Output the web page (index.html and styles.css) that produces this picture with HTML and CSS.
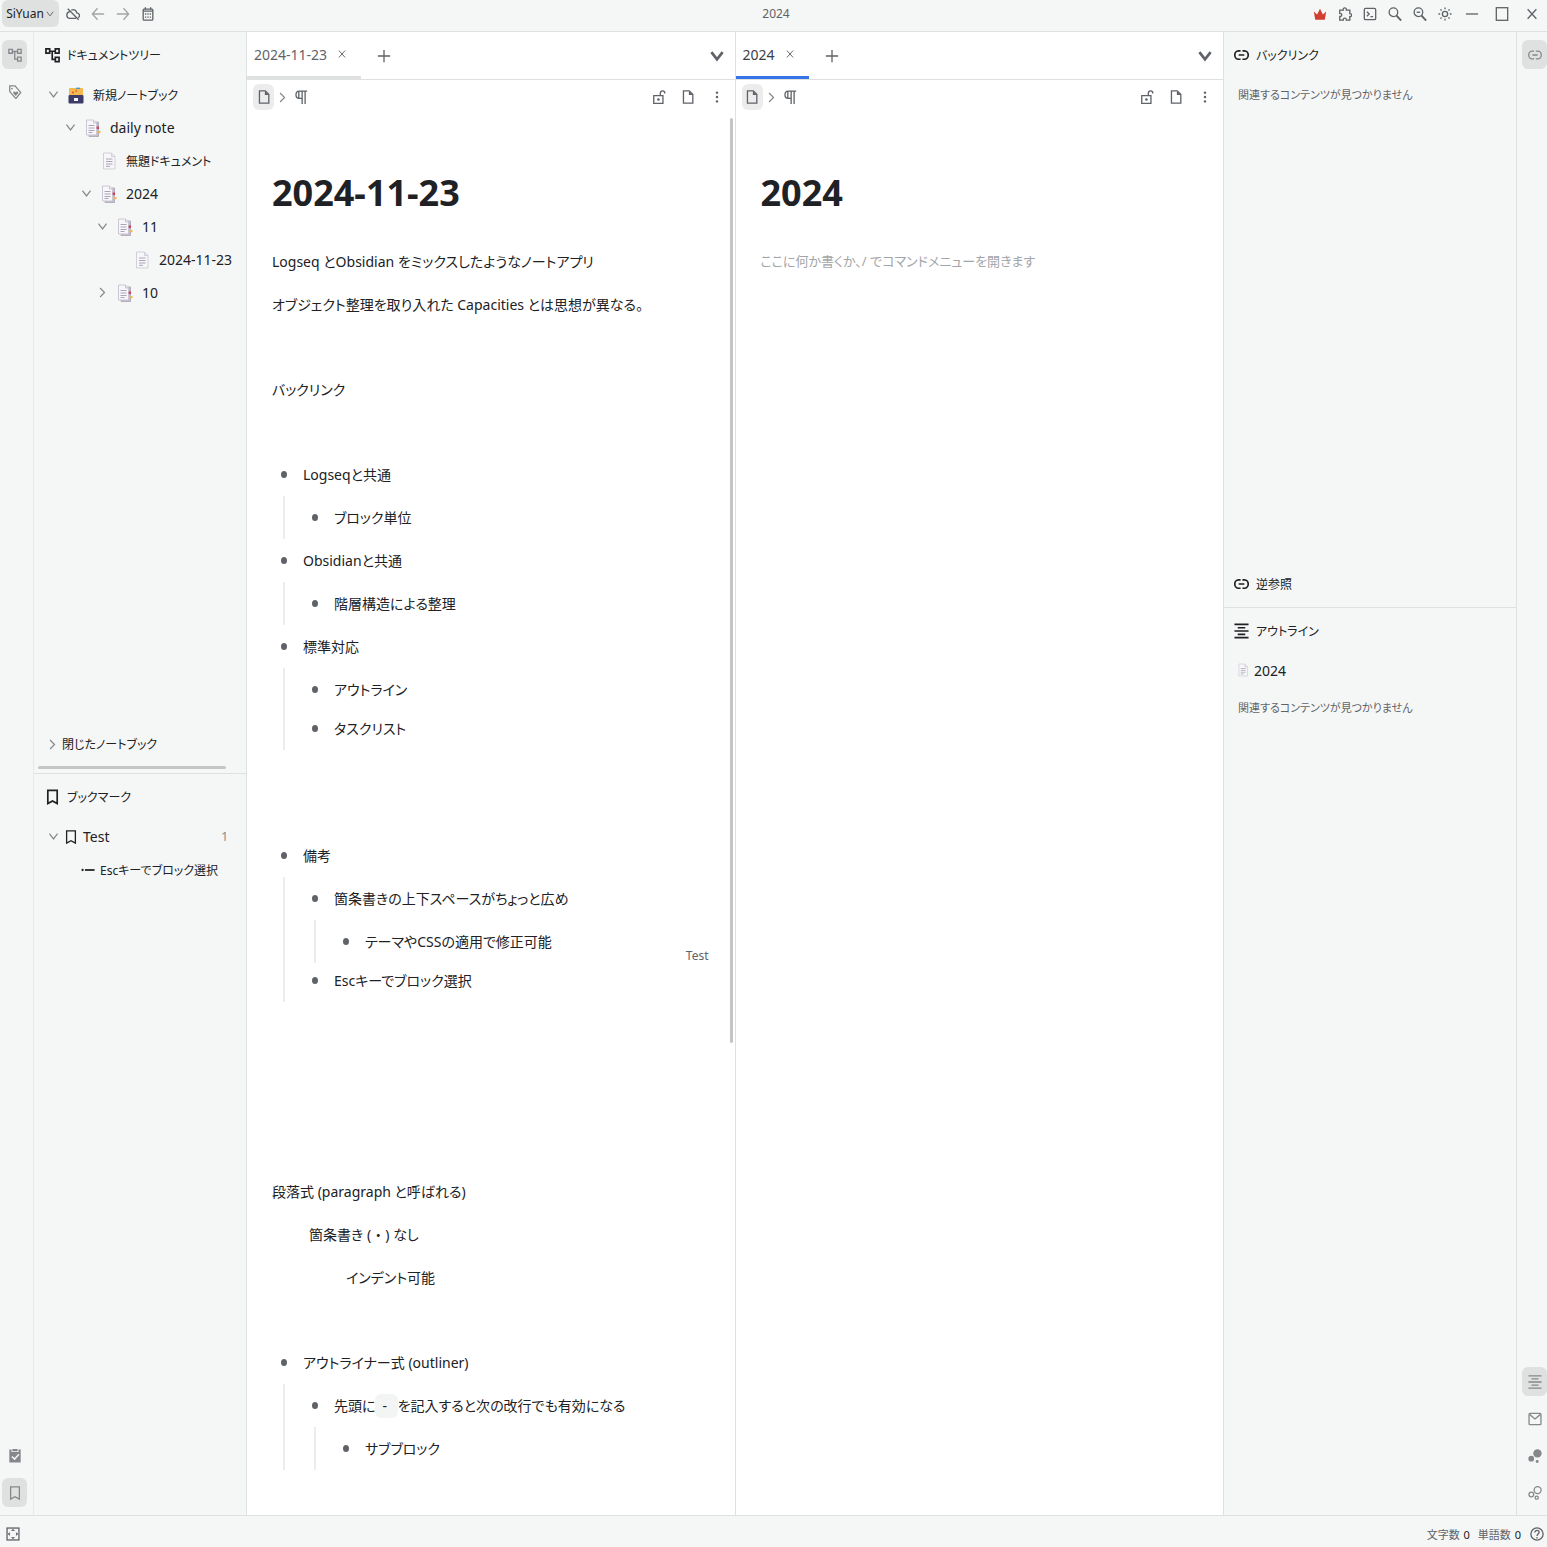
FILE: index.html
```
<!DOCTYPE html>
<html lang="ja">

<head>
    <meta charset="utf-8">
    <meta name="viewport" content="width=device-width, initial-scale=1.0">
    <title>SiYuan</title>
    <link rel="stylesheet" href="styles.css">
</head>

<body>

<!-- icons -->
<svg class="sprite" aria-hidden="true">
    <symbol id="i-down" viewBox="0 0 16 16"><path d="M3 4.500 8 11l5-6.500"/></symbol>
    <symbol id="i-right" viewBox="0 0 16 16"><path d="M5 2.500 10.500 8 5 13.500"/></symbol>
    <symbol id="i-cloud" viewBox="0 0 16 16"><path d="M2 2l12.500 12.500M6 3.700c3-1.600 5.900.2 6.300 3 3.500.2 4 4 1.700 5.600M4.400 5.300C-.3 6-.1 13 4.500 13h7"/></symbol>
    <symbol id="i-back" viewBox="0 0 16 16"><path d="M15 8H1.500M7.500 1.500 1.500 8l6 6.500"/></symbol>
    <symbol id="i-forward" viewBox="0 0 16 16"><path d="M1 8h13.500M8.500 1.500l6 6.500-6 6.500"/></symbol>
    <symbol id="i-calendar" viewBox="0 0 16 16"><rect x="2.500" y="2.500" width="11" height="12.500" rx="1"/><path d="M2.500 4.700h11M5 .3v2.500M11 .3v2.500"/><path d="M4.500 8h7M4.500 11.500h7" stroke-dasharray="1.500 1.200"/></symbol>
    <symbol id="i-crown" viewBox="0 0 16 16"><path class="solid" d="M2.500 14.500 1 5l3.700 3.500L8 2l3.300 6.500L15 5l-1.500 9.500z"/></symbol>
    <symbol id="i-puzzle" viewBox="0 0 16 16"><path d="M2 3.500h4c-.8-3.300 4.200-3.300 3.500 0h4v4c2.700-.4 2.700 3.900 0 3.500v4h-4c.6-3-4.100-3-3.500 0H2v-4.200c3 .4 3-4 0-3.500z"/></symbol>
    <symbol id="i-terminal" viewBox="0 0 16 16"><rect x="1.500" y="1.500" width="13" height="13" rx="1.500"/><path d="M4.500 5.500 7 8l-2.500 2.500M8.500 11h3"/></symbol>
    <symbol id="i-search" viewBox="0 0 16 16"><circle cx="6.200" cy="6" r="4.900"/><path d="M9.500 9.500 15 15.500" stroke-width="2.200"/></symbol>
    <symbol id="i-zoomout" viewBox="0 0 16 16"><circle cx="6.200" cy="6" r="4.900"/><path d="M9.500 9.500 15 15.500" stroke-width="2.200"/><path d="M4.200 6h4"/></symbol>
    <symbol id="i-sun" viewBox="0 0 16 16"><circle cx="8" cy="8" r="3"/><path d="M8 .5v2M8 13.500v2M.5 8h2M13.500 8h2M2.700 2.700l1.400 1.400M11.900 11.900l1.400 1.400M2.700 13.300l1.400-1.400M11.900 4.100l1.400-1.400"/></symbol>
    <symbol id="i-min" viewBox="0 0 16 16"><path d="M1 8h14"/></symbol>
    <symbol id="i-max" viewBox="0 0 16 16"><rect x="1.500" y="0.800" width="13" height="14.400"/></symbol>
    <symbol id="i-close" viewBox="0 0 16 16"><path d="M3 2.500l10 11M13 2.500l-10 11"/></symbol>
    <symbol id="i-tree" viewBox="0 0 16 16"><path d="M1 1.500h4v4.500H1zM11 1.500h4v4.500h-4zM11 10.500h4v4.500h-4zM5 4h6M7.700 4v8.700H11"/></symbol>
    <symbol id="i-tag" viewBox="0 0 16 16"><path d="M2 1h6l6.500 7.500-5.500 7-7-8z"/><circle class="solid" cx="4.500" cy="4" r="1"/><path class="solid" d="M8.800 12.700 6 9.500c-.5-2.300 1.800-2.800 2.800-1.200 1-1.600 3.300-1.100 2.800 1.200z"/></symbol>
    <symbol id="i-link" viewBox="0 0 16 16"><path d="M7 3.500H4.800a4 4.500 0 0 0 0 9H7M9 3.500h2.200a4 4.500 0 0 1 0 9H9M5 8h6"/></symbol>
    <symbol id="i-outline" viewBox="0 0 16 16"><path d="M.5 1h15M4 4.500h8M.5 8h15M4 11.500h8M.5 15h15"/></symbol>
    <symbol id="i-bookmark" viewBox="0 0 16 16"><path d="M3 1h10v14l-5-2.700L3 15z"/></symbol>
    <symbol id="i-file" viewBox="0 0 16 16"><path d="M2.800 1H9.500L13.500 5v10H2.800z"/><path class="solid" d="M9 1v4.700h4.500z"/></symbol>
    <symbol id="i-para" viewBox="0 0 16 16"><path d="M15 1.200H6M9.300 1.200V16M12.700 1.200V16M9 9.500H6C1 9.500 1 1.200 6 1.200M5.500 1.500v8"/></symbol>
    <symbol id="i-lock" viewBox="0 0 16 16"><path d="M2 6.500h10.500v8.700H2zM9.500 6.500V4c0-4 5.200-4 5.200 0"/><circle class="solid" cx="7.300" cy="10.800" r="1.500"/></symbol>
    <symbol id="i-more" viewBox="0 0 16 16"><circle class="solid" cx="8" cy="3" r="1.400"/><circle class="solid" cx="8" cy="8" r="1.400"/><circle class="solid" cx="8" cy="13" r="1.400"/></symbol>
    <symbol id="i-plus" viewBox="0 0 16 16"><path d="M8 1v14M1 8h14"/></symbol>
    <symbol id="i-item" viewBox="0 0 16 16"><circle class="solid" cx="1.800" cy="8" r="1.300"/><path d="M4.500 8H15.500" stroke-width="2"/></symbol>
    <symbol id="i-mail" viewBox="0 0 16 16"><rect x="1.200" y="1.500" width="13.600" height="13" rx="1"/><path d="M2 3l6 5 6-5"/></symbol>
    <symbol id="i-graph" viewBox="0 0 16 16"><circle class="solid" cx="10.800" cy="5" r="4.800"/><circle class="solid" cx="3.700" cy="11" r="3.300"/><circle class="solid" cx="10.500" cy="14.200" r="1.700"/></symbol>
    <symbol id="i-graph2" viewBox="0 0 16 16"><circle cx="11" cy="4.700" r="4"/><circle cx="3.800" cy="9.700" r="2.700"/><circle cx="10" cy="13.300" r="1.800"/></symbol>
    <symbol id="i-task" viewBox="0 0 16 16"><path class="solid" d="M1.500 .5H4v3h8v-3h2.500v15h-13zM5 0h6v2.500H5z"/><path d="M4.500 8.500l3 3 5-5.500" stroke="#f5f7f6" stroke-width="1.700"/></symbol>
    <symbol id="i-full" viewBox="0 0 16 16"><rect x="1.200" y="1.200" width="13.600" height="13.600"/><path d="M6.500 4 8 2.500 9.500 4zM6.500 12 8 13.500 9.500 12zM4 6.500 2.500 8 4 9.500zM12 6.500 13.500 8 12 9.500z" stroke-width="1"/></symbol>
    <symbol id="i-help" viewBox="0 0 16 16"><circle cx="8" cy="8" r="7"/><path d="M5.600 6.300c0-3.400 4.800-3 4.800-.2C10.400 8 8 8 8 10.200M8 11.500v1.500"/></symbol>
    <symbol id="i-page" viewBox="0 0 16 18"><path d="M2.500 1h8L14 4.500V17H2.500z" fill="#f7f6f9" stroke="#d3cfd9"/><path d="M10.500 1v3.500H14" fill="#e6e3ea" stroke="#d3cfd9"/><path d="M5 7h6.500M5 9.500h6.500M5 12h6.500M5 14.300h4" stroke="#aba4b8" stroke-width="1"/></symbol>
    <symbol id="i-pages" viewBox="0 0 16 18"><path d="M4 3h9.500v14.500H4z" fill="#c2bccb" stroke="#b5aebf"/><path d="M1.500 1H8.500l3 3v12H1.500z" fill="#f7f6f9" stroke="#cbc6d3"/><path d="M8.500 1v3h3" fill="#e6e3ea" stroke="#cbc6d3"/><path d="M3.500 6.500H9.500M3.500 9H9.500M3.500 11.500H9.500M3.500 13.500h4" stroke="#aba4b8" stroke-width="1"/><path d="M11.700 7.500h2.300v2.500h-2.300z" fill="#ce3f5e" stroke="none"/><path d="M13.300 12h2.200v2.200h-2.200z" fill="#f6b93b" stroke="none"/></symbol>
    <symbol id="i-box" viewBox="0 0 16 18"><rect x="1" y="2" width="14" height="8" rx="1" fill="#f5b84f" stroke="none"/><path d="M8 2.300h4" stroke="#3f97cf" stroke-width="1.300"/><path d="M4 6.500h2M7.500 5.500 9 4.500" stroke="#d9543c" stroke-width="1.300"/><rect x="0.500" y="9" width="15" height="8.500" rx="1" fill="#3d3c68" stroke="none"/><rect x="6" y="12" width="4" height="3" fill="#f4f4fa" stroke="none"/></symbol>
</svg>

<header class="topbar">
    <button class="brand">SiYuan<svg class="icon tiny"><use href="#i-down"/></svg></button>
    <nav class="tools">
        <button aria-label="同期"><svg class="icon"><use href="#i-cloud"/></svg></button>
        <button class="dim" aria-label="戻る"><svg class="icon"><use href="#i-back"/></svg></button>
        <button class="dim" aria-label="進む"><svg class="icon"><use href="#i-forward"/></svg></button>
        <button aria-label="デイリーノート"><svg class="icon"><use href="#i-calendar"/></svg></button>
    </nav>
    <div class="window-title">2024</div>
    <nav class="tools">
        <button class="crown" aria-label="会員"><svg class="icon"><use href="#i-crown"/></svg></button>
        <button aria-label="プラグイン"><svg class="icon"><use href="#i-puzzle"/></svg></button>
        <button aria-label="コマンド"><svg class="icon"><use href="#i-terminal"/></svg></button>
        <button aria-label="検索"><svg class="icon"><use href="#i-search"/></svg></button>
        <button aria-label="縮小"><svg class="icon"><use href="#i-zoomout"/></svg></button>
        <button aria-label="外観"><svg class="icon"><use href="#i-sun"/></svg></button>
    </nav>
    <nav class="window-buttons">
        <button aria-label="最小化"><svg class="icon"><use href="#i-min"/></svg></button>
        <button aria-label="最大化"><svg class="icon"><use href="#i-max"/></svg></button>
        <button aria-label="閉じる"><svg class="icon"><use href="#i-close"/></svg></button>
    </nav>
</header>

<div class="layout">

    <nav class="dock dock-left">
        <button class="active" aria-label="ドキュメントツリー"><svg class="icon"><use href="#i-tree"/></svg></button>
        <button aria-label="タグ"><svg class="icon"><use href="#i-tag"/></svg></button>
        <span class="spacer"></span>
        <button aria-label="タスク"><svg class="icon"><use href="#i-task"/></svg></button>
        <button class="active" aria-label="ブックマーク"><svg class="icon"><use href="#i-bookmark"/></svg></button>
    </nav>

    <aside class="side side-left">
        <section class="panel">
            <h2><svg class="icon"><use href="#i-tree"/></svg>ドキュメントツリー</h2>
            <ul class="tree">
                <li class="level0"><svg class="icon arrow"><use href="#i-down"/></svg><svg class="emoji"><use href="#i-box"/></svg><a class="kana" href="#">新規ノートブック</a></li>
                <li class="level1"><svg class="icon arrow"><use href="#i-down"/></svg><svg class="emoji"><use href="#i-pages"/></svg><a href="#">daily note</a></li>
                <li class="level2"><span class="arrow"></span><svg class="emoji"><use href="#i-page"/></svg><a class="kana" href="#">無題ドキュメント</a></li>
                <li class="level2"><svg class="icon arrow"><use href="#i-down"/></svg><svg class="emoji"><use href="#i-pages"/></svg><a href="#">2024</a></li>
                <li class="level3"><svg class="icon arrow"><use href="#i-down"/></svg><svg class="emoji"><use href="#i-pages"/></svg><a href="#">11</a></li>
                <li class="level4"><span class="arrow"></span><svg class="emoji"><use href="#i-page"/></svg><a href="#">2024-11-23</a></li>
                <li class="level3"><svg class="icon arrow"><use href="#i-right"/></svg><svg class="emoji"><use href="#i-pages"/></svg><a href="#">10</a></li>
            </ul>
            <span class="spacer"></span>
            <button class="closed"><svg class="icon arrow"><use href="#i-right"/></svg>閉じたノートブック</button>
            <div class="hscroll"></div>
        </section>
        <section class="panel">
            <h2><svg class="icon"><use href="#i-bookmark"/></svg>ブックマーク</h2>
            <ul class="tree marks">
                <li class="level0"><svg class="icon arrow"><use href="#i-down"/></svg><svg class="icon mark"><use href="#i-bookmark"/></svg><a href="#">Test</a><span class="count">1</span></li>
                <li class="level1"><span class="arrow"></span><svg class="icon mark"><use href="#i-item"/></svg><a class="kana" href="#">Escキーでブロック選択</a></li>
            </ul>
        </section>
    </aside>

    <main class="pane">
        <div class="tabs">
            <div class="tab"><a href="#">2024-11-23</a><button aria-label="タブを閉じる"><svg class="icon tiny"><use href="#i-close"/></svg></button></div>
            <button aria-label="新規タブ"><svg class="icon"><use href="#i-plus"/></svg></button>
            <span class="spacer"></span>
            <button class="switch" aria-label="タブ一覧"><svg class="icon"><use href="#i-down"/></svg></button>
        </div>
        <div class="crumbs">
            <button class="doc" aria-label="文書"><svg class="icon"><use href="#i-file"/></svg></button>
            <svg class="icon arrow"><use href="#i-right"/></svg>
            <svg class="icon"><use href="#i-para"/></svg>
            <span class="spacer"></span>
            <button aria-label="編集ロック"><svg class="icon"><use href="#i-lock"/></svg></button>
            <button aria-label="文書メニュー"><svg class="icon"><use href="#i-file"/></svg></button>
            <button aria-label="その他"><svg class="icon"><use href="#i-more"/></svg></button>
        </div>
        <article class="editor">
            <div class="vscroll"></div>
            <h1>2024-11-23</h1>
            <p>Logseq とObsidian をミックスしたようなノートアプリ</p>
            <p>オブジェクト整理を取り入れた Capacities とは思想が異なる。</p>
            <p class="blank"></p>
            <p>バックリンク</p>
            <p class="blank"></p>
            <ul class="blocks">
                <li><p>Logseqと共通</p>
                    <ul>
                        <li><p>ブロック単位</p></li>
                    </ul>
                </li>
                <li><p>Obsidianと共通</p>
                    <ul>
                        <li><p>階層構造による整理</p></li>
                    </ul>
                </li>
                <li><p>標準対応</p>
                    <ul>
                        <li><p>アウトライン</p></li>
                        <li><p>タスクリスト</p></li>
                    </ul>
                </li>
            </ul>
            <p class="blank"></p>
            <p class="blank"></p>
            <ul class="blocks">
                <li><p>備考</p>
                    <ul>
                        <li><p>箇条書きの上下スペースがちょっと広め</p>
                            <ul>
                                <li><p>テーマやCSSの適用で修正可能</p></li>
                            </ul>
                        </li>
                        <li class="marked"><p>Escキーでブロック選択</p><span class="attr">Test</span></li>
                    </ul>
                </li>
            </ul>
            <p class="blank"></p>
            <p class="blank"></p>
            <p class="blank"></p>
            <p class="blank"></p>
            <p>段落式 (paragraph と呼ばれる)</p>
            <p class="indent1">箇条書き ( ・ ) なし</p>
            <p class="indent2">インデント可能</p>
            <p class="blank"></p>
            <ul class="blocks">
                <li><p>アウトライナー式 (outliner)</p>
                    <ul>
                        <li><p>先頭に<code>- </code>を記入すると次の改行でも有効になる</p>
                            <ul>
                                <li><p>サブブロック</p></li>
                            </ul>
                        </li>
                    </ul>
                </li>
            </ul>
        </article>
    </main>

    <section class="pane">
        <div class="tabs">
            <div class="tab current"><a href="#">2024</a><button aria-label="タブを閉じる"><svg class="icon tiny"><use href="#i-close"/></svg></button></div>
            <button aria-label="新規タブ"><svg class="icon"><use href="#i-plus"/></svg></button>
            <span class="spacer"></span>
            <button class="switch" aria-label="タブ一覧"><svg class="icon"><use href="#i-down"/></svg></button>
        </div>
        <div class="crumbs">
            <button class="doc" aria-label="文書"><svg class="icon"><use href="#i-file"/></svg></button>
            <svg class="icon arrow"><use href="#i-right"/></svg>
            <svg class="icon"><use href="#i-para"/></svg>
            <span class="spacer"></span>
            <button aria-label="編集ロック"><svg class="icon"><use href="#i-lock"/></svg></button>
            <button aria-label="文書メニュー"><svg class="icon"><use href="#i-file"/></svg></button>
            <button aria-label="その他"><svg class="icon"><use href="#i-more"/></svg></button>
        </div>
        <article class="editor">
            <h1>2024</h1>
            <p class="hint">ここに何か書くか、/ でコマンドメニューを開きます</p>
        </article>
    </section>

    <aside class="side side-right">
        <section class="panel backlinks">
            <h2><svg class="icon"><use href="#i-link"/></svg>バックリンク</h2>
            <p class="empty">関連するコンテンツが見つかりません</p>
            <span class="spacer"></span>
            <h2><svg class="icon"><use href="#i-link"/></svg>逆参照</h2>
        </section>
        <section class="panel outline">
            <h2><svg class="icon"><use href="#i-outline"/></svg>アウトライン</h2>
            <a class="outline-doc" href="#"><svg class="emoji"><use href="#i-page"/></svg>2024</a>
            <p class="empty">関連するコンテンツが見つかりません</p>
        </section>
    </aside>

    <nav class="dock dock-right">
        <button class="active" aria-label="バックリンク"><svg class="icon"><use href="#i-link"/></svg></button>
        <span class="spacer"></span>
        <button class="active" aria-label="アウトライン"><svg class="icon"><use href="#i-outline"/></svg></button>
        <button aria-label="受信箱"><svg class="icon"><use href="#i-mail"/></svg></button>
        <button aria-label="グラフ"><svg class="icon"><use href="#i-graph"/></svg></button>
        <button aria-label="全体グラフ"><svg class="icon"><use href="#i-graph2"/></svg></button>
    </nav>

</div>

<footer class="status">
    <button aria-label="ドックを隠す"><svg class="icon"><use href="#i-full"/></svg></button>
    <span class="spacer"></span>
    <span>文字数 <b>0</b></span>
    <span>単語数 <b>0</b></span>
    <button class="help" aria-label="ヘルプ"><svg class="icon"><use href="#i-help"/></svg></button>
</footer>

</body>

</html>
```
FILE: styles.css
```
* {
    box-sizing: border-box;
}

body {
    margin: 0;
    min-height: 100vh;
    display: flex;
    flex-direction: column;
    background-color: #f5f7f6;
    color: #202124;
    font-family: "Noto Sans", "Noto Sans CJK JP", sans-serif;
    font-size: 14px;
    font-feature-settings: "palt";
}

h1, h2, p, ul {
    margin: 0;
    padding: 0;
}

ul {
    list-style: none;
}

a {
    color: inherit;
    text-decoration: none;
    white-space: nowrap;
}

button {
    display: flex;
    align-items: center;
    justify-content: center;
    border: 0;
    padding: 0;
    background: none;
    color: #5f6368;
    font: inherit;
    font-feature-settings: inherit;
}

/* icons */

.sprite {
    position: absolute;
    width: 0;
    height: 0;
}

.icon {
    width: 14px;
    height: 14px;
    flex: none;
    fill: none;
    stroke: currentColor;
    stroke-width: 1.5;
}

.icon.tiny {
    width: 10px;
    height: 10px;
}

.solid {
    fill: currentColor;
    stroke: none;
}

.emoji {
    width: 16px;
    height: 20px;
    flex: none;
    fill: none;
}

.spacer {
    flex: 1;
}

/* top bar */

.topbar {
    display: grid;
    grid-template-columns: auto auto 1fr auto auto;
    align-items: start;
    height: 32px;
    padding-left: 2px;
    border-bottom: 1px solid #dfe1e0;
}

.brand {
    width: 57px;
    height: 27px;
    gap: 1px;
    border-radius: 6px;
    background-color: #dfe1e0;
    color: #202124;
    font-size: 12px;
}

.brand .icon {
    color: #5f6368;
}

.tools,
.window-buttons {
    display: flex;
    height: 27px;
}

.tools {
    padding-left: 1px;
}

.tools button {
    width: 25px;
}

.window-buttons button {
    width: 30px;
}

.tools .dim {
    color: #a2a5a8;
}

.tools .crown {
    color: #d23f31;
}

.window-title {
    padding-left: 86px;
    text-align: center;
    line-height: 28px;
    font-size: 12px;
    color: #5f6368;
}

/* columns */

.layout {
    flex: 1;
    display: grid;
    grid-template-columns: 34px 213px 1fr 1fr 292px 31px;
}

.dock {
    display: flex;
    flex-direction: column;
    gap: 8px;
    padding: 8px 2px;
}

.dock button {
    width: 25px;
    height: 29px;
    border-radius: 6px;
    color: #85888b;
}

.dock .active {
    background-color: #dfe1e0;
}

.dock-left {
    border-right: 1px solid #e6e8e7;
}

.dock-right {
    padding-left: 5px;
    border-left: 1px solid #dfe1e0;
}

/* side panels */

.side {
    display: flex;
    flex-direction: column;
}

.side-left {
    border-right: 1px solid #dfe1e0;
}

.panel {
    flex: 1 1 0;
    display: flex;
    flex-direction: column;
}

.panel + .panel {
    border-top: 1px solid #dfe1e0;
}

.backlinks {
    flex-grow: 19;
}

.outline {
    flex-grow: 30;
}

.panel h2 {
    display: flex;
    align-items: center;
    gap: 7px;
    height: 46px;
    padding-left: 11px;
    font-size: 12px;
    font-weight: normal;
}

.side-right h2 {
    padding-left: 10px;
}

.panel h2 .icon {
    width: 15px;
    height: 16px;
    stroke-width: 1.8;
}

.tree li {
    display: flex;
    align-items: center;
    height: 33px;
    padding-right: 18px;
}

.arrow {
    width: 13px;
    height: 13px;
    flex: none;
    color: #85888b;
}

.tree .emoji {
    margin: 0 9px 0 8px;
}

.tree .mark {
    margin: 0 5px 0 4px;
}

.kana {
    font-size: 12px;
}

.level0 {
    margin-left: 13px;
}

.level1 {
    margin-left: 30px;
}

.level2 {
    margin-left: 46px;
}

.level3 {
    margin-left: 62px;
}

.level4 {
    margin-left: 79px;
}

.count {
    margin-left: auto;
    font-size: 12px;
    color: #85888b;
}

.closed {
    justify-content: flex-start;
    gap: 3px;
    height: 44px;
    padding-left: 12px;
    font-size: 12px;
    color: #202124;
}

.hscroll {
    width: 188px;
    height: 3px;
    margin: 0 0 4px 4px;
    border-radius: 2px;
    background-color: #c4c6c5;
}

.empty {
    padding-left: 14px;
    line-height: 33px;
    font-size: 11px;
    color: #5f6368;
}

.outline-doc {
    display: flex;
    align-items: center;
    gap: 5px;
    height: 33px;
    padding-left: 13px;
    margin-bottom: 4px;
}

.outline-doc .emoji {
    width: 12px;
    height: 14px;
}

/* editor panes */

.pane {
    display: flex;
    flex-direction: column;
    min-width: 0;
    border-right: 1px solid #dfe1e0;
    background-color: #fff;
}

.tabs {
    display: flex;
    height: 48px;
    border-bottom: 1px solid #dfe1e0;
}

.tab {
    display: flex;
    align-items: center;
    gap: 10px;
    padding: 0 14px 0 7px;
    border-bottom: 3px solid #dfe1e0;
    color: #5f6368;
}

.tab.current {
    border-color: #3575e8;
    color: #3c4043;
}

.tabs > button {
    width: 46px;
}

.tabs .switch {
    width: 36px;
}

.switch .icon {
    width: 18px;
    height: 18px;
    stroke-width: 2.4;
}

.crumbs {
    display: flex;
    align-items: center;
    height: 34px;
    gap: 5px;
    padding: 0 6px;
    color: #5f6368;
}

.crumbs .arrow {
    margin: 0 -3px;
}

.crumbs .arrow + .icon {
    margin-left: 3px;
}

.crumbs button {
    width: 24px;
    height: 26px;
}

.crumbs .doc {
    width: 21px;
    border-radius: 6px;
    background-color: #ececec;
}

.editor {
    position: relative;
    flex: 1;
    padding: 54px 26px 40px 25px;
    font-size: 14px;
}

.vscroll {
    position: absolute;
    top: 4px;
    right: 2px;
    width: 3px;
    height: 66%;
    border-radius: 2px;
    background-color: #c4c6c5;
}

.editor h1 {
    margin-bottom: 22px;
    line-height: 50px;
    font-size: 36px;
}

.editor p {
    line-height: 43px;
}

.editor .blank {
    height: 42px;
}

.editor .hint {
    color: #a2a5a8;
    font-size: 13px;
}

.indent1 {
    padding-left: 37px;
}

.indent2 {
    padding-left: 74px;
}

.blocks p {
    display: flex;
    align-items: center;
    height: 43px;
}

/* round bullet in front of every block */
.blocks p::before {
    content: "";
    width: 6px;
    height: 7px;
    flex: none;
    margin: 0 16px 0 9px;
    border-radius: 50%;
    background-color: #5f6368;
}

.blocks ul {
    margin-left: 11px;
    padding-left: 18px;
    border-left: 2px solid #ececec;
}

.blocks ul > li + li {
    margin-top: -4px;
}

.marked {
    position: relative;
}

.attr {
    position: absolute;
    top: -12px;
    right: 0;
    font-size: 12px;
    color: #5f6368;
}

code {
    padding: 0 7px;
    border-radius: 6px;
    background-color: #f3f5f4;
    font-family: inherit;
    font-size: 14px;
    line-height: 24px;
    white-space: pre;
}

/* status bar */

.status {
    display: flex;
    align-items: center;
    gap: 8px;
    height: 32px;
    padding: 4px 3px 0 6px;
    border-top: 1px solid #dfe1e0;
    font-size: 11px;
    color: #5f6368;
}

.status b {
    margin-left: 1px;
    font-weight: normal;
    color: #202124;
}

.status .help {
    margin-left: 1px;
}
```
